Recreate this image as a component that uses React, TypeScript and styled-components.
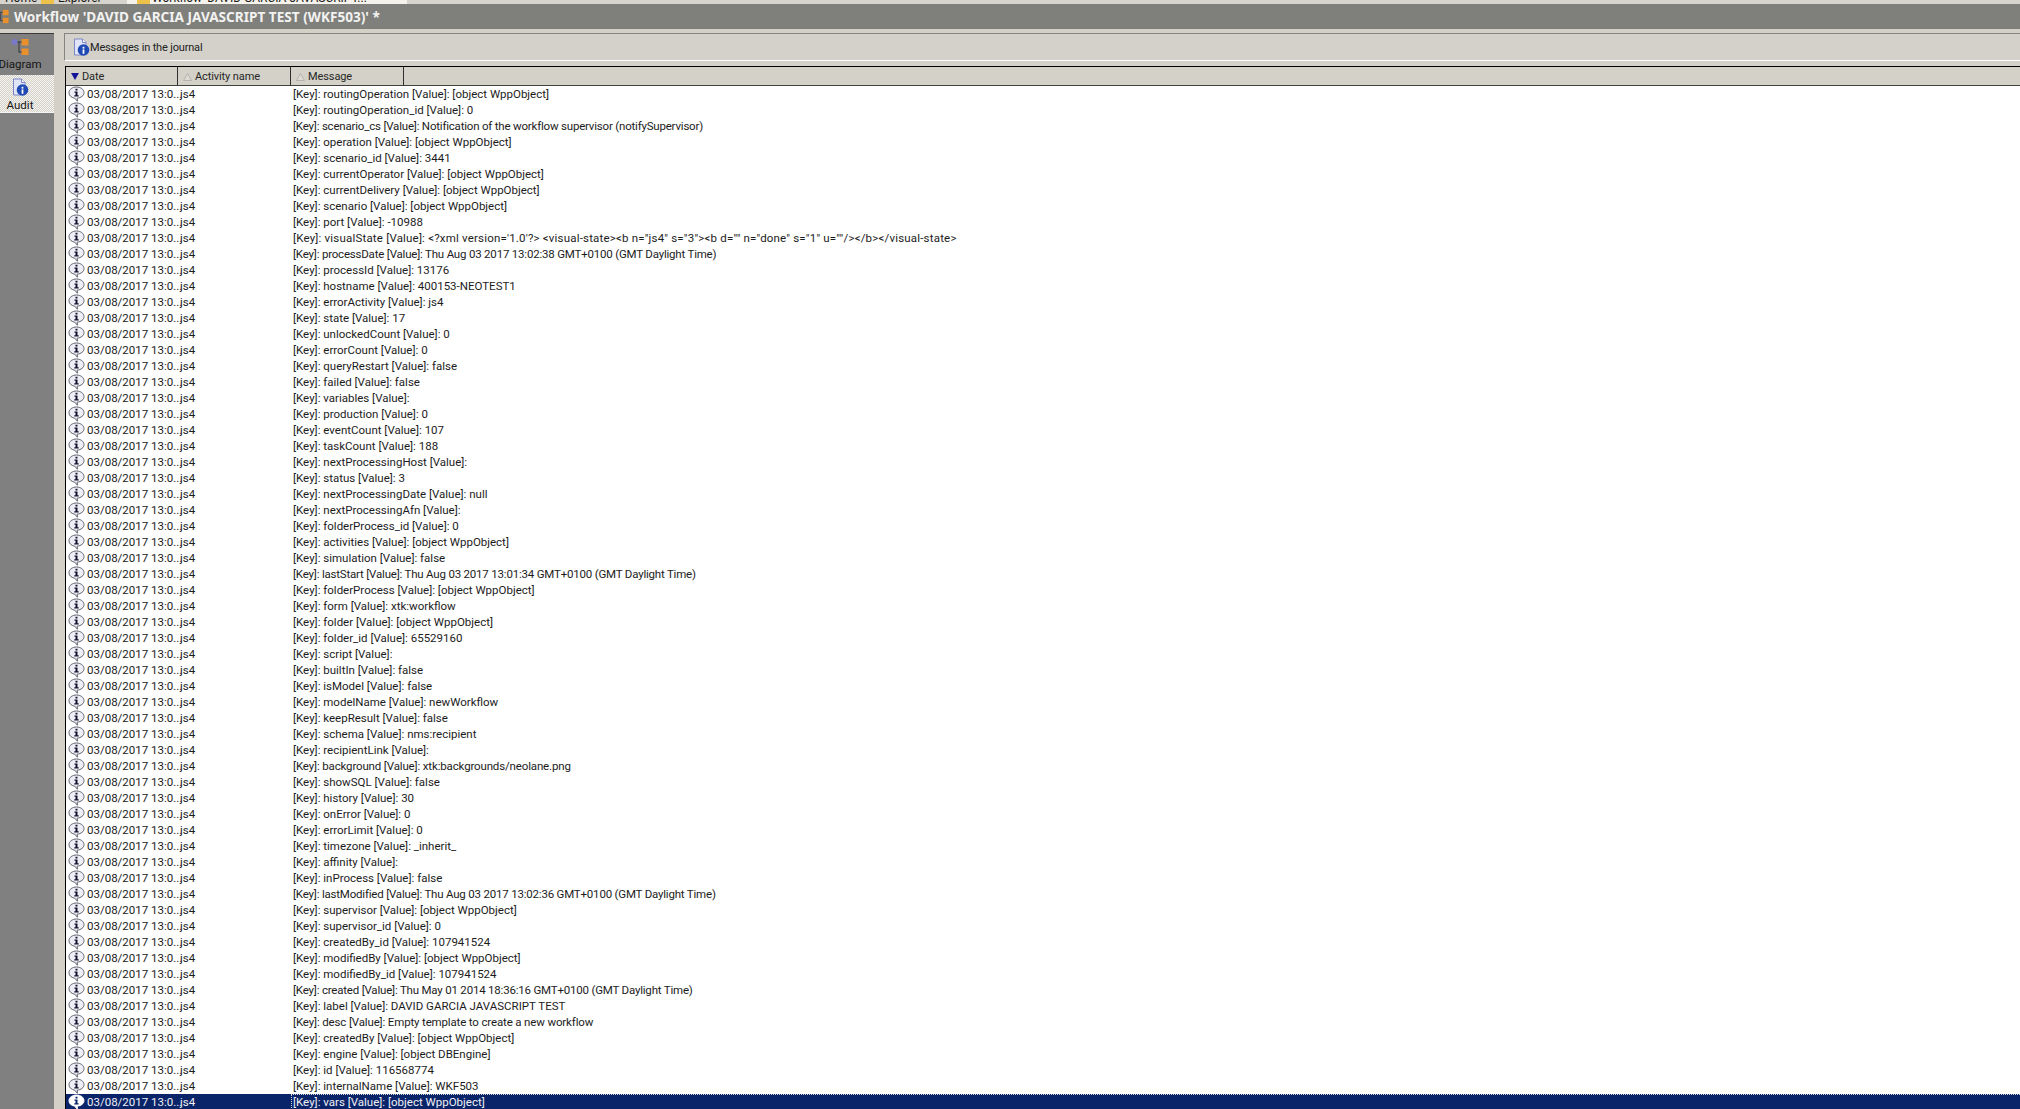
import React from "react";
import styled, { createGlobalStyle } from "styled-components";

const GlobalStyle = createGlobalStyle`
  html, body {
    margin: 0;
    padding: 0;
    background: #d4d0c8;
    overflow: hidden;
  }
  #root {
    height: 1109px;
  }
`;

const Window = styled.div`
  display: flex;
  flex-direction: column;
  width: 2020px;
  height: 1109px;
  overflow: hidden;
  background: #d4d0c8;
  font-family: Roboto, Tahoma, sans-serif;
  font-size: 11.5px;
  color: #1c1c1c;
`;

const TabStrip = styled.div`
  display: flex;
  align-items: flex-end;
  flex: none;
  height: 4px;
  overflow: hidden;
  background: #d6d4cc;
  padding-left: 4px;
`;

const StripTab = styled.div<{ $active?: boolean; $width: number }>`
  display: flex;
  flex: none;
  align-items: center;
  gap: ${(p) => (p.$active ? "2px" : "4px")};
  height: 13px;
  padding-left: ${(p) => (p.$active ? "10px" : "1px")};
  width: ${(p) => p.$width}px;
  box-sizing: border-box;
  background: ${(p) => (p.$active ? "#f4f2ea" : "transparent")};
  font-size: 12px;
  white-space: nowrap;
  overflow: hidden;
`;

const FolderMark = styled.span`
  display: inline-block;
  flex: none;
  width: 13px;
  height: 13px;
  background: #eec24a;
`;

const TitleBar = styled.div`
  display: flex;
  flex: none;
  align-items: center;
  gap: 5px;
  height: 25px;
  overflow: hidden;
  background: #7f7f7c;
  color: #f2f2f0;
  font-family: "Noto Sans", Tahoma, sans-serif;
  font-size: 13.6px;
  font-weight: 700;
  white-space: nowrap;
`;

const TitleIcon = styled.span`
  display: flex;
  flex: none;
  margin-left: -6px;
`;

const Body = styled.div`
  display: flex;
  flex: 1;
  min-height: 0;
  padding-top: 4px;
`;

const Sidebar = styled.div`
  display: flex;
  flex: none;
  flex-direction: column;
  width: 54px;
  background: #808080;
  border-top: 1px solid #3c3c3c;
`;

const SideButton = styled.div<{ $active?: boolean }>`
  display: flex;
  flex-direction: column;
  align-items: center;
  box-sizing: border-box;
  height: ${(p) => (p.$active ? "38px" : "41px")};
  padding: ${(p) => (p.$active ? "3px" : "4px")} 14px 0 0;
  gap: ${(p) => (p.$active ? "2px" : "1px")};
  line-height: 14px;
  color: #141414;
  background: ${(p) =>
    p.$active
      ? "repeating-conic-gradient(#f6f5f1 0% 25%, #d2cfc7 0% 50%) 0 0 / 2px 2px"
      : "#808080"};
  border-bottom: ${(p) => (p.$active ? "1px solid #f4f4f0" : "none")};
`;

const Content = styled.div`
  display: flex;
  flex: 1;
  min-width: 0;
  flex-direction: column;
  margin-left: 10px;
`;

const Toolbar = styled.div`
  display: flex;
  flex: none;
  align-items: center;
  gap: 0;
  box-sizing: border-box;
  height: 28px;
  padding-left: 8px;
  background: #d3d1ca;
  border-top: 1px solid #85857f;
  border-left: 1px solid #85857f;
  border-bottom: 1px solid #ffffff;
  color: #222222;
  font-size: 11px;
  letter-spacing: -0.17px;
`;

const Table = styled.div`
  display: flex;
  flex: 1;
  min-height: 0;
  flex-direction: column;
  margin: 5px 0 0 1px;
  border-top: 1px solid #000000;
  border-left: 1px solid #000000;
  background: #ffffff;
  overflow: hidden;
`;

const HeaderRow = styled.div`
  display: flex;
  flex: none;
  height: 18px;
  background: #d4d2c8;
  border-bottom: 1px solid #404040;
`;

const HeaderCell = styled.div<{ $width: number }>`
  display: flex;
  flex: none;
  align-items: center;
  gap: 3px;
  box-sizing: border-box;
  width: ${(p) => p.$width}px;
  padding: 1px 0 0 5px;
  border-right: 1px solid #303030;
  color: #262626;
  font-size: 11px;
  letter-spacing: -0.1px;
`;

const SortMark = styled.svg`
  flex: none;
  display: block;
`;

const Row = styled.div<{ $selected?: boolean }>`
  display: flex;
  flex: none;
  align-items: center;
  height: 16px;
  white-space: nowrap;
  background: ${(p) => (p.$selected ? "#0a246a" : "#ffffff")};
  color: ${(p) => (p.$selected ? "#f0f0f4" : "#1c1c1c")};
`;

const DateCell = styled.div`
  display: flex;
  flex: none;
  align-items: center;
  gap: 2px;
  box-sizing: border-box;
  width: 112px;
  padding-left: 2px;
`;

const ActivityCell = styled.div`
  flex: none;
  box-sizing: border-box;
  width: 113px;
  padding-left: 2px;
`;

const MessageCell = styled.div<{ $selected?: boolean; $tracking: number }>`
  flex: 1;
  box-sizing: border-box;
  height: 16px;
  line-height: 14px;
  padding-left: 1px;
  letter-spacing: ${(p) => p.$tracking}px;
  border: 1px dotted ${(p) => (p.$selected ? "#d8d8d8" : "transparent")};
  border-right: none;
`;

// small balloon with an "i", drawn at the 16px size the list uses
const InfoBalloon = ({ selected }: { selected?: boolean }) => (
  <svg width="17" height="16" viewBox="0 0 17 16" style={{ flex: "none" }}>
    <path
      d="M8.5 1C4.4 1 1 3.300 1 6.700c0 2.900 2.400 5 5.600 5.400l2.800 3.200-.2-3.200C13 11.900 16 9.600 16 6.700 16 3.300 12.600 1 8.500 1z"
      fill={selected ? "#ffffff" : "#eeeef6"}
      stroke={selected ? "#ffffff" : "#62626e"}
      strokeWidth="1"
    />
    <path
      d="M7.500 2.700h2v1.800h-2zM6.500 5.500h3v3.700h1.100v1.200H6.300V9.200h1.200V6.700h-1z"
      fill={selected ? "#0a246a" : "#14142e"}
    />
  </svg>
);

const WorkflowIcon = ({ size }: { size: number }) => (
  <svg width={size} height={size} viewBox="0 0 18 18" style={{ flex: "none" }}>
    <path d="M5 4h6M8 4v10h3" fill="none" stroke="#4a4a52" strokeWidth="1.4" />
    <circle cx="3.500" cy="4" r="3" fill="#7a78c8" />
    <rect x="10.500" y="1" width="7" height="6.500" fill="#e8902c" />
    <rect x="10.500" y="10.500" width="7" height="6.500" fill="#e8902c" />
  </svg>
);

const JournalIcon = () => (
  <svg width="17" height="18" viewBox="0 0 17 18" style={{ flex: "none" }}>
    <path d="M1.500 1h8l3.500 3.500V8H9v9H1.500z" fill="#dfe4f6" stroke="#7d86c8" />
    <path d="M9.500 1v3.500H13" fill="#f8f8ff" stroke="#7d86c8" />
    <circle cx="10.500" cy="12" r="5.800" fill="#1f49b4" />
    <rect x="9.600" y="8.800" width="1.800" height="1.800" fill="#ffffff" />
    <rect x="9.600" y="11.400" width="1.800" height="4.400" fill="#ffffff" />
  </svg>
);

const messages: string[] = [
  "routingOperation [Value]: [object WppObject]",
  "routingOperation_id [Value]: 0",
  "scenario_cs [Value]: Notification of the workflow supervisor (notifySupervisor)",
  "operation [Value]: [object WppObject]",
  "scenario_id [Value]: 3441",
  "currentOperator [Value]: [object WppObject]",
  "currentDelivery [Value]: [object WppObject]",
  "scenario [Value]: [object WppObject]",
  "port [Value]: -10988",
  `visualState [Value]: <?xml version='1.0'?> <visual-state><b n="js4" s="3"><b d="" n="done" s="1" u=""/></b></visual-state>`,
  "processDate [Value]: Thu Aug 03 2017 13:02:38 GMT+0100 (GMT Daylight Time)",
  "processId [Value]: 13176",
  "hostname [Value]: 400153-NEOTEST1",
  "errorActivity [Value]: js4",
  "state [Value]: 17",
  "unlockedCount [Value]: 0",
  "errorCount [Value]: 0",
  "queryRestart [Value]: false",
  "failed [Value]: false",
  "variables [Value]:",
  "production [Value]: 0",
  "eventCount [Value]: 107",
  "taskCount [Value]: 188",
  "nextProcessingHost [Value]:",
  "status [Value]: 3",
  "nextProcessingDate [Value]: null",
  "nextProcessingAfn [Value]:",
  "folderProcess_id [Value]: 0",
  "activities [Value]: [object WppObject]",
  "simulation [Value]: false",
  "lastStart [Value]: Thu Aug 03 2017 13:01:34 GMT+0100 (GMT Daylight Time)",
  "folderProcess [Value]: [object WppObject]",
  "form [Value]: xtk:workflow",
  "folder [Value]: [object WppObject]",
  "folder_id [Value]: 65529160",
  "script [Value]:",
  "builtIn [Value]: false",
  "isModel [Value]: false",
  "modelName [Value]: newWorkflow",
  "keepResult [Value]: false",
  "schema [Value]: nms:recipient",
  "recipientLink [Value]:",
  "background [Value]: xtk:backgrounds/neolane.png",
  "showSQL [Value]: false",
  "history [Value]: 30",
  "onError [Value]: 0",
  "errorLimit [Value]: 0",
  "timezone [Value]: _inherit_",
  "affinity [Value]:",
  "inProcess [Value]: false",
  "lastModified [Value]: Thu Aug 03 2017 13:02:36 GMT+0100 (GMT Daylight Time)",
  "supervisor [Value]: [object WppObject]",
  "supervisor_id [Value]: 0",
  "createdBy_id [Value]: 107941524",
  "modifiedBy [Value]: [object WppObject]",
  "modifiedBy_id [Value]: 107941524",
  "created [Value]: Thu May 01 2014 18:36:16 GMT+0100 (GMT Daylight Time)",
  "label [Value]: DAVID GARCIA JAVASCRIPT TEST",
  "desc [Value]: Empty template to create a new workflow",
  "createdBy [Value]: [object WppObject]",
  "engine [Value]: [object DBEngine]",
  "id [Value]: 116568774",
  "internalName [Value]: WKF503",
  "vars [Value]: [object WppObject]",
];

// the long values run a bit wider or narrower than in the font of the original
const trackingFor = (text: string) => {
  if (text.startsWith("visualState")) return 0.19;
  if (text.includes("GMT+") || text.startsWith("scenario_cs")) return -0.2;
  if (text.startsWith("desc") || text.startsWith("background")) return -0.15;
  return 0;
};

export default function App() {
  return (
    <Window>
      <GlobalStyle />
      <TabStrip>
        <StripTab $width={36}>Home</StripTab>
        <StripTab $width={87}>
          <FolderMark />
          Explorer
        </StripTab>
        <StripTab $active $width={280}>
          <FolderMark />
          Workflow 'DAVID GARCIA JAVASCRIPT...
        </StripTab>
      </TabStrip>
      <TitleBar>
        <TitleIcon>
          <WorkflowIcon size={15} />
        </TitleIcon>
        Workflow 'DAVID GARCIA JAVASCRIPT TEST (WKF503)' *
      </TitleBar>
      <Body>
        <Sidebar>
          <SideButton>
            <WorkflowIcon size={18} />
            Diagram
          </SideButton>
          <SideButton $active>
            <JournalIcon />
            Audit
          </SideButton>
        </Sidebar>
        <Content>
          <Toolbar>
            <JournalIcon />
            Messages in the journal
          </Toolbar>
          <Table>
            <HeaderRow>
              <HeaderCell $width={112}>
                <SortMark width="8" height="7" viewBox="0 0 9 8">
                  <path d="M0 0h9L4.500 8z" fill="#14149a" />
                </SortMark>
                Date
              </HeaderCell>
              <HeaderCell $width={113}>
                <SortMark width="9" height="8" viewBox="0 0 9 8">
                  <path d="M.5 7.500h8L4.500.5z" fill="#dcdad2" stroke="#b4b2aa" />
                </SortMark>
                Activity name
              </HeaderCell>
              <HeaderCell $width={113}>
                <SortMark width="9" height="8" viewBox="0 0 9 8">
                  <path d="M.5 7.500h8L4.500.5z" fill="#dcdad2" stroke="#b4b2aa" />
                </SortMark>
                Message
              </HeaderCell>
            </HeaderRow>
            {messages.map((text, i) => {
              const selected = i === messages.length - 1;
              return (
                <Row key={text} $selected={selected}>
                  <DateCell>
                    <InfoBalloon selected={selected} />
                    03/08/2017 13:0...
                  </DateCell>
                  <ActivityCell>js4</ActivityCell>
                  <MessageCell $selected={selected} $tracking={trackingFor(text)}>
                    [Key]: {text}
                  </MessageCell>
                </Row>
              );
            })}
          </Table>
        </Content>
      </Body>
    </Window>
  );
}
